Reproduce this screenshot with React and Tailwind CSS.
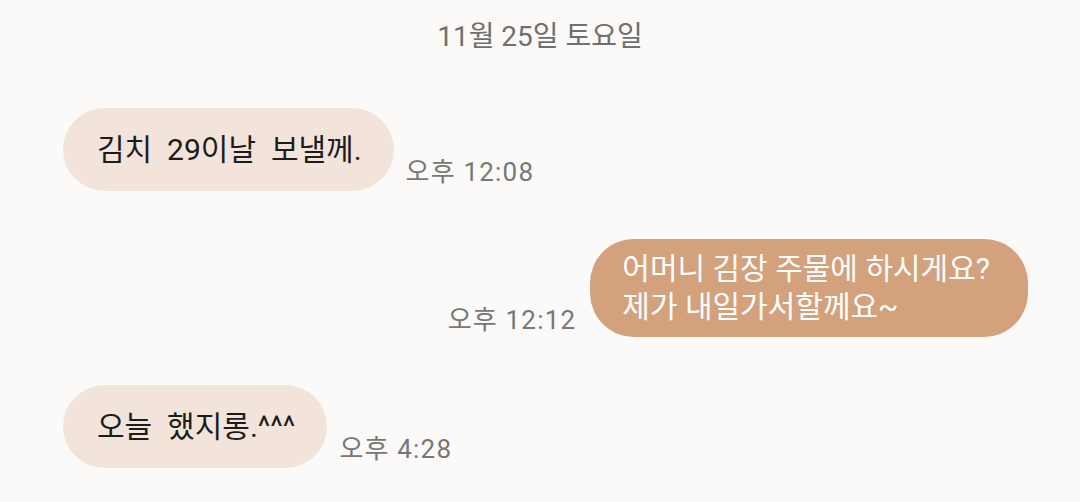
const font = { fontFamily: "Roboto, 'Noto Sans CJK KR', sans-serif" };

function Incoming({ children, time }) {
  return (
    <div className="flex items-end pl-[63px]">
      <div className="h-[83px] flex items-center rounded-full bg-[#f3e4db] pl-[34px] pr-[32px] text-[30px] leading-[38px] text-[#1c1c1c] whitespace-pre">
        {children}
      </div>
      <span className="ml-[12px] mb-[2px] text-[26px] leading-[34px] tracking-[1.2px] text-[#777777]">{time}</span>
    </div>
  );
}

function Outgoing({ lines, time }) {
  return (
    <div className="flex items-end justify-end pr-[52px]">
      <span className="mr-[14px] text-[26px] leading-[34px] tracking-[1.2px] text-[#777777]">{time}</span>
      <div className="rounded-[44px] bg-[#d4a17d] pl-[32px] pr-[38px] py-[11px] text-[30px] leading-[38px] text-white">
        {lines.map((l) => (
          <div key={l}>{l}</div>
        ))}
      </div>
    </div>
  );
}

export default function App() {
  return (
    <div className="w-[1080px] h-[502px] bg-[#fbfaf8] overflow-hidden" style={font}>
      <div className="pt-[19px] text-center text-[28px] leading-[36px] text-[#6f6f6f]">11월 25일 토요일</div>
      <div className="mt-[53px] flex flex-col gap-[48px]">
        <Incoming time="오후 12:08">김치  29이날  보낼께.</Incoming>
        <Outgoing time="오후 12:12" lines={["어머니 김장 주물에 하시게요?", "제가 내일가서할께요~"]} />
        <Incoming time="오후 4:28">오늘  했지롱.^^^</Incoming>
      </div>
    </div>
  );
}
